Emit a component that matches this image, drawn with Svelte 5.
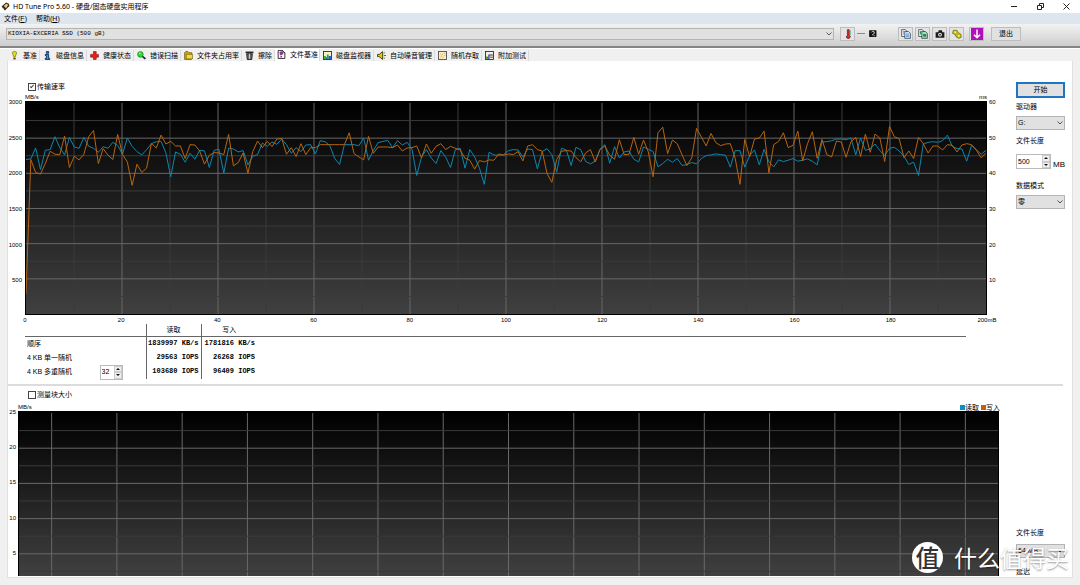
<script>
  // Trace samples, measured downwards from the 3000 MB/s line, with an origin of 37.
  const read = [
    208, 206, 173, 238, 180, 178, 139, 172, 194, 141, 170, 174, 141, 168, 174, 186, 169, 174, 156, 165,
    192, 143, 168, 184, 194, 178, 160, 154, 153, 188, 260, 185, 192, 216, 189, 207, 180, 182, 232, 180,
    177, 249, 173, 176, 185, 181, 224, 198, 193, 158, 168, 155, 162, 146, 163, 189, 172, 184, 164, 163,
    191, 151, 154, 166, 205, 223, 163, 163, 163, 166, 143, 210, 180, 157, 153, 150, 172, 151, 164, 156,
    176, 256, 200, 178, 203, 220, 181, 201, 232, 178, 174, 234, 178, 200, 234, 283, 186, 194, 195, 193,
    181, 178, 179, 200, 176, 178, 236, 184, 175, 193, 246, 174, 179, 226, 171, 178, 214, 221, 213, 177,
    163, 219, 169, 203, 185, 182, 207, 215, 170, 177, 184, 230, 220, 207, 216, 205, 226, 223, 217, 221,
    205, 196, 194, 191, 193, 195, 231, 181, 181, 231, 196, 179, 224, 177, 215, 230, 209, 214, 210, 205,
    213, 210, 206, 213, 224, 155, 154, 151, 146, 146, 148, 143, 194, 143, 180, 176, 161, 181, 196, 174,
    171, 182, 198, 223, 216, 256, 161, 156, 154, 156, 151, 134, 168, 175, 176, 213, 165, 178, 192, 180
  ];
  const write = [
    615, 208, 247, 252, 220, 183, 192, 193, 137, 232, 198, 209, 192, 139, 120, 220, 175, 195, 208, 132,
    192, 215, 286, 222, 247, 234, 159, 173, 134, 161, 153, 167, 167, 205, 163, 164, 182, 222, 195, 187,
    188, 193, 132, 227, 217, 188, 249, 184, 152, 172, 153, 169, 146, 144, 192, 172, 199, 160, 193, 172,
    172, 163, 163, 163, 163, 163, 163, 127, 190, 200, 209, 138, 189, 170, 170, 170, 172, 164, 182, 173,
    172, 167, 203, 161, 189, 168, 160, 178, 168, 174, 179, 204, 210, 237, 211, 215, 209, 210, 191, 195,
    191, 193, 184, 212, 167, 163, 178, 182, 250, 277, 208, 183, 181, 182, 202, 215, 188, 178, 215, 177,
    167, 195, 207, 148, 193, 192, 141, 192, 149, 185, 260, 127, 110, 190, 149, 160, 194, 226, 203, 114,
    140, 167, 129, 157, 166, 161, 160, 204, 283, 147, 200, 146, 143, 122, 248, 163, 153, 127, 172, 165,
    122, 212, 160, 124, 204, 147, 193, 200, 152, 155, 201, 154, 141, 199, 131, 186, 131, 143, 214, 108,
    139, 145, 202, 182, 205, 141, 160, 188, 167, 167, 179, 163, 165, 185, 164, 160, 163, 180, 203, 187
  ];
  const points = (values) => values.map((v, i) => `${i},${v - 37}`).join(' ');

  const tabs = [
    ['bang', '基准'], ['info', '磁盘信息'], ['cross', '健康状态'], ['lens', '错误扫描'],
    ['folder', '文件夹占用率'], ['bin', '擦除'], ['filebench', '文件基准'], ['bars', '磁盘监视器'],
    ['speaker', '自动噪音管理'], ['scatter', '随机存取'], ['extra', '附加测试']
  ];
  const speedMarks = ['3000', '2500', '2000', '1500', '1000', '500'];
  const timeMarks = ['60', '50', '40', '30', '20', '10'];
  const sizeMarks = ['0', '20', '40', '60', '80', '100', '120', '140', '160', '180', '200mB'];
  const blockMarks = ['25', '20', '15', '10', '5'];
  const range = (n) => Array.from({ length: n }, (_, i) => i);

  let transfer = $state(true);
  let block = $state(false);
  let queue = $state(32);
  let length = $state(500);
</script>

{#snippet icon(name)}
  <svg class="icon" viewBox="0 0 16 16" aria-hidden="true">
    {#if name === 'bang'}
      <path d="M4 3 Q4 1 8 1 Q12 1 12 3 L9 11 H7Z" fill="#e8e010" stroke="#55500a" />
      <rect x="6" y="12" width="4" height="3" fill="#4a4a08" />
    {:else if name === 'info'}
      <path d="M6 1h4v3H6z M4 6h6v7h2v2H4v-2h2V8H4z" fill="#2f9be8" stroke="#0c2350" stroke-width="1.5" />
    {:else if name === 'cross'}
      <path d="M6 1h5v5h4v5h-4v4H6v-4H1V6h5z" fill="#e3211c" stroke="#7c0d0b" />
    {:else if name === 'lens'}
      <path d="M9 9l6 5" stroke="#15225c" stroke-width="3" />
      <circle cx="6" cy="6" r="5" fill="#33d833" stroke="#116011" />
      <circle cx="5" cy="4" r="1.5" fill="#baf7ba" />
    {:else if name === 'folder'}
      <path d="M1 3l2-2h4l2 2h5v11l-1 1H1z" fill="#c9a610" stroke="#4b3d05" />
      <path d="M4 6h11v8H4z" fill="#f3d93a" stroke="#6b5906" />
    {:else if name === 'bin'}
      <path d="M1 1h14v3H1z" fill="#222" />
      <path d="M3 5h10l-1 10H4z" fill="#6c6c6c" stroke="#111" stroke-width="1.5" />
      <path d="M8 5v9" stroke="#ddd" stroke-width="1.5" />
    {:else if name === 'filebench'}
      <path d="M2 1h8l4 4v10H2z" fill="#fff" stroke="#111" stroke-width="1.5" />
      <path d="M10 1v4h4" fill="none" stroke="#111" />
      <path d="M5 4q3-2 5 0v3l-2 2H6z" fill="#c423c8" stroke="#551058" />
      <path d="M6 11h3v2H6z" fill="#551058" />
    {:else if name === 'bars'}
      <rect x="1" y="1" width="14" height="14" fill="#f5f2c4" stroke="#222" stroke-width="1.5" />
      <path d="M2 9h3v5H2zM7 6h3v8H7z" fill="#14b414" />
      <path d="M5 11h2v3H5zM10 9h4v5h-4z" fill="#1759d8" />
    {:else if name === 'speaker'}
      <path d="M1 6h3l6-5v14l-6-5H1z" fill="#d8cc12" stroke="#333006" stroke-width="1.5" />
      <path d="M12 4l2-1M12 8h4M12 12l2 1" stroke="#5d5808" stroke-width="1.6" />
    {:else if name === 'scatter'}
      <rect x="1" y="1" width="14" height="14" fill="#f9efc0" stroke="#444" stroke-width="1.5" />
      <path d="M4 12h1M5 9h2M8 11h2M7 6h2M11 8h2M11 4h2M4 5h1" stroke="#e08a2c" stroke-width="1.5" />
    {:else if name === 'extra'}
      <rect x="1" y="1" width="14" height="14" fill="#f5f2d4" stroke="#222" stroke-width="1.5" />
      <path d="M2 10h4v4H2z" fill="#14a014" />
      <path d="M7 7h7M7 6v8" stroke="#1b2fb8" stroke-width="2" />
      <path d="M9 11h5" stroke="#cc2a2a" stroke-width="2" />
    {:else if name === 'app'}
      <path d="M1 8L9 1l5 2 1 4-8 8-3-3z" fill="#3a2a18" />
      <path d="M5 7l4-4 4 2-4 6z" fill="#eec48b" />
      <path d="M2 10l3 1-1 2-2-1z" fill="#ddd" />
    {:else if name === 'thermo'}
      <path d="M7 1h3v9l2 2-2 3H7l-2-2 2-3z" fill="#e02a20" stroke="#501010" />
      <path d="M12 2v8" stroke="#2aa" />
    {:else if name === 'disk'}
      <rect x="2" y="2" width="13" height="12" rx="1" fill="#111" />
      <path d="M6 6l2-2 3 1v3l-4 3M10 12h2" stroke="#eee" stroke-width="1.5" fill="none" />
    {:else if name === 'copy' || name === 'copyimg'}
      <path d="M1 1h6l3 3v8H1z" fill="#e8f1fb" stroke="#222" />
      <path d="M6 4h6l3 3v8H6z" fill={name === 'copy' ? '#cfe5fb' : '#a8d8b8'} stroke="#222" />
      <path d="M3 4h3M3 6h2M3 8h2" stroke="#2b6fc4" />
      {#if name === 'copy'}
        <path d="M8 8h5M8 10h5M8 12h5" stroke="#2b7fe0" />
      {:else}
        <path d="M8 8h5v4H8z" fill="#18a148" /><path d="M3 4h2v4H3z" fill="#18a148" /><path d="M10 10h3v2h-3z" fill="#2b5fc4" />
      {/if}
    {:else if name === 'camera'}
      <path d="M1 5h4l1-3h5l1 3h3v9H1z" fill="#1b1b1b" />
      <circle cx="8" cy="9" r="3" fill="#eee" /><circle cx="8" cy="9" r="1.4" fill="#222" />
    {:else if name === 'gear'}
      <path d="M2 2h6l2 4 4 2 1 5-4 2-4-2-2-4-4-2z" fill="#c6bb14" stroke="#5d5808" />
      <circle cx="5" cy="5" r="1.5" fill="#f6f1a0" /><circle cx="11" cy="11" r="1.5" fill="#f6f1a0" />
    {:else if name === 'down'}
      <rect width="16" height="16" fill="#b010b8" />
      <path d="M8 2v11M4 9l4 4 4-4" stroke="#fff" stroke-width="2" fill="none" />
    {/if}
  </svg>
{/snippet}

{#snippet dropdown(label, text, cls)}
  <span class="drop {cls}">
    <select aria-label={label}><option>{text}</option></select>
    <svg viewBox="0 0 6 4" aria-hidden="true"><path d="M.5 .5L3 3L5.5 .5" fill="none" stroke="#555" /></svg>
  </span>
{/snippet}

{#snippet stepper(step)}
  <span class="steps">
    <button aria-label="增加" onclick={() => step(1)}><svg viewBox="0 0 4 2"><path d="M0 2L2 0L4 2z" /></svg></button>
    <button aria-label="减少" onclick={() => step(-1)}><svg viewBox="0 0 4 2"><path d="M0 0L2 2L4 0z" /></svg></button>
  </span>
{/snippet}

<div class="app">
  <header class="title">
    {@render icon('app')}
    <h1>HD Tune Pro 5.60 - 硬盘/固态硬盘实用程序</h1>
    <div class="window">
      <button aria-label="最小化"><svg viewBox="0 0 7 7"><path d="M0 3.5h6" /></svg></button>
      <button aria-label="还原"><svg viewBox="0 0 7 7"><path d="M.5 2.5h4v4h-4zM2.5 2V.5h4v4H5" /></svg></button>
      <button aria-label="关闭"><svg viewBox="0 0 7 7"><path d="M.5 .5l6 6M6.5 .5l-6 6" /></svg></button>
    </div>
  </header>

  <nav class="menu">
    <button>文件(<u>F</u>)</button>
    <button>帮助(<u>H</u>)</button>
  </nav>

  <div class="toolbar">
    {@render dropdown('驱动器', 'KIOXIA-EXCERIA SSD (500 gB)', 'drive')}
    <button class="tool" aria-label="温度">{@render icon('thermo')}</button>
    <span class="dash"></span>
    <span class="state">{@render icon('disk')}</span>
    <div class="tools">
      <button class="tool" aria-label="复制文本">{@render icon('copy')}</button>
      <button class="tool" aria-label="复制图像">{@render icon('copyimg')}</button>
      <button class="tool" aria-label="截图">{@render icon('camera')}</button>
      <button class="tool" aria-label="选项">{@render icon('gear')}</button>
      <button class="tool save" aria-label="保存">{@render icon('down')}</button>
    </div>
    <button class="exit">退出</button>
  </div>

  <div class="tabs" role="tablist">
    {#each tabs as [name, text]}
      <button role="tab" aria-selected={name === 'filebench'} class:on={name === 'filebench'}>
        {@render icon(name)}{text}
      </button>
    {/each}
  </div>

  <main>
    <section class="upper">
      <div class="body">
        <label class="check"><input type="checkbox" bind:checked={transfer} />传输速率</label>
        <div class="units"><span>MB/s</span><span>ms</span></div>
        <div class="plot">
          <div class="marks left">{#each speedMarks as m}<span>{m}</span>{/each}</div>
          <div class="chart">
            <svg viewBox="0 0 199 638" preserveAspectRatio="none">
              {#each range(19) as i}
                <line x1={(i + 1) * 9.95} x2={(i + 1) * 9.95} y1="0" y2="638" class={i % 2 ? 'major' : 'minor'} />
              {/each}
              {#each range(11) as i}
                <line x1="0" x2="199" y1={((i + 1) * 638) / 12} y2={((i + 1) * 638) / 12} class={i % 2 ? 'major' : 'minor'} />
              {/each}
              {#if transfer}
                <polyline points={points(read)} class="read" />
                <polyline points={points(write)} class="write" />
              {/if}
            </svg>
          </div>
          <div class="marks">{#each timeMarks as m}<span>{m}</span>{/each}</div>
        </div>
        <div class="sizes">{#each sizeMarks as m}<span>{m}</span>{/each}</div>
        <table>
          <colgroup><col class="c1" /><col class="c2" /><col class="c3" /><col /></colgroup>
          <thead><tr><td></td><th scope="col">读取</th><th scope="col">写入</th><td></td></tr></thead>
          <tbody>
            <tr><th scope="row">顺序</th><td>1839997 KB/s</td><td>1781816 KB/s</td><td></td></tr>
            <tr><th scope="row">4 KB 单一随机</th><td>29563 IOPS</td><td>26268 IOPS</td><td></td></tr>
            <tr>
              <th scope="row">
                <div class="queue">
                  <label for="queue">4 KB 多重随机</label>
                  <span class="spin"><input id="queue" type="number" bind:value={queue} />{@render stepper((d) => (queue += d))}</span>
                </div>
              </th>
              <td>103680 IOPS</td><td>96409 IOPS</td><td></td>
            </tr>
          </tbody>
        </table>
      </div>
      <aside>
        <button class="start">开始</button>
        <p>驱动器</p>
        {@render dropdown('驱动器', 'G:', '')}
        <label class="cap" for="length">文件长度</label>
        <div class="len">
          <span class="spin"><input id="length" type="number" bind:value={length} />{@render stepper((d) => (length += d))}</span>
          <span>MB</span>
        </div>
        <p class="mode">数据模式</p>
        {@render dropdown('数据模式', '零', '')}
      </aside>
    </section>

    <section class="lower">
      <div class="body">
        <label class="check"><input type="checkbox" bind:checked={block} />测量块大小</label>
        <div class="units">
          <span>MB/s</span>
          <span class="legend"><i class="r"></i>读取<i class="w"></i>写入</span>
        </div>
        <div class="plot">
          <div class="marks left">{#each blockMarks as m}<span>{m}</span>{/each}</div>
          <div class="chart">
            <svg viewBox="0 0 150 100" preserveAspectRatio="none">
              {#each range(15) as i}
                <line x1={i * 10 + 5} x2={i * 10 + 5} y1="0" y2="100" class="major" />
              {/each}
              {#each range(9) as i}
                <line x1="0" x2="150" y1={(i + 1) * 10} y2={(i + 1) * 10} class={i % 2 ? 'major' : 'minor'} />
              {/each}
            </svg>
          </div>
        </div>
      </div>
      <aside>
        <p>文件长度</p>
        {@render dropdown('文件长度', '64 MB', '')}
        <p class="delay">延迟</p>
      </aside>
    </section>
  </main>

  <div class="brand"><b>值</b><span>什么值得买</span></div>
</div>

<style>
  :global(body) { background: #f0f0f0; }
  .app {
    position: relative; box-sizing: border-box; height: 100vh; min-height: 500px; padding-bottom: 7px;
    display: flex; flex-direction: column; overflow: hidden; color: #000;
    font: 7px/8px "Liberation Sans", "Noto Sans CJK SC", sans-serif;
  }
  :where(.app) :where(button, input, select) { box-sizing: border-box; margin: 0; padding: 0; font: inherit; color: inherit; border-radius: 0; }
  .icon { display: block; flex: none; width: 9px; height: 9px; }
  p { margin: 0; }

  .title { flex: none; height: 13px; display: flex; align-items: center; gap: 3px; padding: 0 10px 0 1px; background: #fff; }
  .title h1 { margin: 0; flex: 1; font: 7px/12px "Noto Sans", "Noto Sans CJK SC", sans-serif; }
  .window { display: flex; gap: 19px; }
  .window button { border: 0; background: none; display: flex; }
  .window svg { width: 7px; height: 7px; fill: none; stroke: #222; }

  .menu { flex: none; height: 11px; display: flex; gap: 9px; padding-left: 4px; background: #dde5ee; }
  .menu button { border: 0; background: none; }

  .toolbar {
    flex: none; height: 24px; box-sizing: border-box; display: flex; align-items: center; padding: 0 59px 3px 6px;
    background: linear-gradient(#f2f2f2, #cecece); border-bottom: 2px solid #858585;
  }
  .drop { display: flex; align-items: center; position: relative; height: 14px; }
  .drop select { appearance: none; width: 100%; height: 100%; padding: 0 1px; border: 1px solid #b4b4b4; background: #e1e1e1; outline: none; }
  .drop svg { position: absolute; right: 2px; width: 6px; height: 4px; pointer-events: none; }
  .drive { flex: 1; height: 12px; margin-right: 6px; }
  .drive select { font: 6px/8px "Liberation Mono", "Noto Sans CJK SC", monospace; }
  .tool { width: 15px; height: 14px; flex: none; border: 1px solid #bdbdbd; background: #e4e4e4; display: flex; align-items: center; justify-content: center; }
  .tool .icon { width: 10px; height: 10px; }
  .dash { width: 8px; height: 1px; margin: 0 3px 0 2px; background: #888; }
  .state { margin-right: 21px; }
  .tools { display: flex; gap: 2px; margin-right: 7px; }
  .save { margin-left: 3px; }
  .save .icon { width: 12px; height: 12px; }
  .exit { width: 30px; height: 14px; border: 1px solid #bdbdbd; background: #e1e1e1; }

  .tabs { flex: none; height: 13px; display: flex; align-items: flex-end; padding-left: 7px; border-top: 1px solid #fff; box-sizing: border-box; }
  .tabs button {
    display: flex; align-items: center; gap: 4px; height: 11px; padding: 0 2px 0 3px; white-space: nowrap;
    border: 0; border-right: 1px solid #dadada; background: #f0f0f0;
  }
  .tabs button.on { height: 12px; padding: 0 1px 1px 2px; background: #fff; }

  main { flex: 1; min-height: 0; margin: 0 7px; display: flex; flex-direction: column; background: #fff; border: 1px solid #e0e0e0; border-top: 0; }
  section { display: flex; }
  .body { flex: 1; min-width: 0; }
  aside { flex: none; width: 49px; padding-right: 7px; }

  .check { display: flex; align-items: center; gap: 1px; width: max-content; height: 9px; margin-left: 20px; }
  .check input { appearance: none; width: 8px; height: 8px; border: 1px solid #444; background: #fff; }
  .check input:checked { position: relative; }
  .check input:checked::after { content: ''; position: absolute; left: 2px; top: 0; width: 1px; height: 3px; border: solid #444; border-width: 0 1px 1px 0; transform: rotate(40deg); }
  .units { display: flex; justify-content: space-between; height: 7px; font-size: 6px; line-height: 7px; }
  .plot { display: flex; }
  .marks { display: flex; flex-direction: column; width: 29px; font-size: 6px; line-height: 8px; }
  .marks span { flex: 1 1 0; padding-left: 2px; margin: -3px 0 3px; }
  .marks.left { width: 17px; text-align: right; }
  .marks.left span { padding: 0 3px 0 0; }
  .chart { flex: 1; min-width: 0; box-sizing: border-box; border: 1px solid #000; border-width: 2px 1px 1px; background: linear-gradient(#000, #404040); }
  .chart svg { display: block; width: 100%; height: 100%; }
  line, polyline { vector-effect: non-scaling-stroke; fill: none; stroke-width: 1px; }
  .major { stroke: #686868; }
  .minor { stroke: #3b3b3b; }
  .read { stroke: #0e86ae; }
  .write { stroke: #b8640f; }

  .upper { flex: none; padding-top: 21px; border-bottom: 2px solid #dcdcdc; margin-right: 9px; height: 302px; }
  .upper aside { margin-right: -9px; }
  .upper .units { margin: 3px 29px 0 17px; }
  .upper .chart { height: 214px; }
  .sizes { display: flex; justify-content: space-between; margin: 1px 29px 0 17px; font-size: 6px; line-height: 8px; }
  .sizes span { width: 0; display: flex; justify-content: center; }

  table { width: calc(100% - 67px); margin: 0 0 0 17px; table-layout: fixed; border-collapse: collapse; }
  .c1 { width: 121px; }
  .c2 { width: 55px; }
  .c3 { width: 56px; }
  th, td { padding: 0; height: 14px; font-weight: 400; text-align: left; line-height: 8px; }
  tbody th { padding-left: 2px; }
  thead :is(th, td) { height: 12px; border-bottom: 1px solid #666; text-align: center; }
  th:nth-child(2), td:nth-child(2), th:nth-child(3), td:nth-child(3) { border-left: 1px solid #666; }
  tbody td { box-sizing: border-box; font: 700 7px/8px "Liberation Mono", monospace; text-align: right; padding: 0 2px 2px 0; }
  .queue { display: flex; align-items: center; justify-content: space-between; height: 14px; padding-right: 23px; }
  .spin { display: flex; box-sizing: border-box; height: 15px; border: 1px solid #bbb; background: #fff; }
  .spin input { width: 13px; border: 0; padding-left: 1px; background: none; outline: none; appearance: textfield; }
  .spin input::-webkit-inner-spin-button { display: none; }
  .steps { display: flex; flex-direction: column; width: 8px; }
  .steps button { flex: 1; border: 1px solid #ccc; background: #f0f0f0; display: flex; align-items: center; justify-content: center; }
  .steps svg { width: 4px; height: 2px; fill: #111; }

  .start { width: 49px; height: 16px; border: 2px solid #1f74c4; background: #e1e1e1; display: block; margin-bottom: 5px; }
  aside p, .cap { display: block; height: 8px; margin-bottom: 5px; }
  .cap { margin-top: 7px; margin-bottom: 9px; }
  .len { display: flex; align-items: flex-end; gap: 2px; }
  .len .spin { width: 36px; }
  .len .spin input { flex: 1; min-width: 0; }
  .len > span:last-child { font-size: 8px; }
  aside .mode { margin-top: 13px; }

  .lower { flex: 1; min-height: 0; overflow: hidden; padding-top: 4px; }
  .lower .body { display: flex; flex-direction: column; }
  .lower .units { margin: 5px 16px 0 10px; flex: none; }
  .legend { display: flex; align-items: center; font-size: 7px; white-space: nowrap; }
  .legend i { width: 5px; height: 5px; }
  .legend .r { background: #0a8fc2; }
  .legend .w { background: #c4600a; margin-left: 2px; }
  .lower .plot { flex: 1; min-height: 0; padding-right: 17px; overflow: hidden; }
  .lower .marks, .lower .chart svg { height: 176px; }
  .lower .marks.left { width: 10px; }
  .lower .marks.left span { padding-right: 2px; margin: -3px 0 3px; }
  .lower .chart { overflow: hidden; border-bottom: 0; margin-bottom: 1px; }
  .lower .plot { overflow: visible; }
  .lower aside { display: flex; flex-direction: column; justify-content: flex-end; }
  .lower aside p { margin-bottom: 7px; }
  aside .drop { flex: none; }
  .lower aside .delay { margin: 10px 0 1px; }

  .brand {
    position: absolute; right: 11px; bottom: 12px; display: flex; align-items: center; gap: 11px; pointer-events: none;
    color: #fff; font: 400 23px/32px "Noto Sans CJK SC", sans-serif; text-shadow: 0 1px 2px rgb(0 0 0 / .45);
  }
  .brand b { width: 31px; height: 31px; border-radius: 50%; background: #fff; color: #333; text-align: center; font: 500 24px/30px "Noto Sans CJK SC", sans-serif; text-shadow: none; }
</style>
